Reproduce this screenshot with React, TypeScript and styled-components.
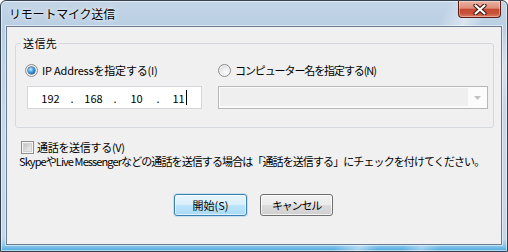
import React from "react";
import styled, { createGlobalStyle } from "styled-components";

const UI_FONT = `"Noto Sans CJK JP", sans-serif`;

const Global = createGlobalStyle`
  html, body { margin: 0; padding: 0; background: #ffffff; }
  body { width: 508px; height: 252px; overflow: hidden; font-family: ${UI_FONT}; }
  #root { width: 508px; height: 252px; }
`;

const Window = styled.div`
  box-sizing: border-box;
  width: 508px;
  height: 252px;
  border: 1px solid #34414f;
  border-radius: 6px 6px 0 0;
  padding: 0 5px 6px 5px;
  display: flex;
  flex-direction: column;
  background:
    linear-gradient(115deg, rgba(255,255,255,0) 72%, rgba(255,255,255,0.45) 76%, rgba(255,255,255,0) 79%, rgba(255,255,255,0) 83%, rgba(255,255,255,0.35) 86%, rgba(255,255,255,0) 89%),
    linear-gradient(to bottom, #c3d5e7 0px, #bacfe3 26px, #c7d8e9 55%, #c4d7ea 95%, #86c4ea 98%, #4ba8de 100%);
  box-shadow: inset 0 0 0 1px rgba(255,255,255,0.55);
  font-family: ${UI_FONT};
`;

const TitleBar = styled.div`
  height: 25px;
  display: flex;
  align-items: flex-start;
  justify-content: space-between;
`;

const Title = styled.div`
  padding: 1px 0 0 3px;
  line-height: 24px;
  font-size: 12px;
  color: #000;
  letter-spacing: -0.2px;
  text-shadow: 0 0 6px rgba(255,255,255,0.95), 0 0 2px rgba(255,255,255,0.8);
`;

const CloseButton = styled.div`
  box-sizing: border-box;
  width: 43px;
  height: 17px;
  margin-right: 1px;
  border: 1px solid #5a1e14;
  border-top: none;
  border-radius: 0 0 4px 4px;
  display: flex;
  align-items: center;
  justify-content: center;
  background: linear-gradient(to bottom, #eab3a5 0%, #de8d79 45%, #c44a31 52%, #c8533a 78%, #e07c62 100%);
  box-shadow: inset 0 0 0 1px rgba(255,255,255,0.35);
`;

const Client = styled.div`
  flex: 1;
  border: 1px solid #6b7d90;
  background: #f0f0f0;
  box-shadow: 0 0 0 1px rgba(255,255,255,0.5);
  padding: 0 7px 0 8px;
  display: flex;
  flex-direction: column;
  color: #000;
  font-size: 11px;
`;

const Text = styled.span<{ $track?: number }>`
  letter-spacing: ${(p) => p.$track ?? 0}px;
  white-space: nowrap;
`;

const GroupBox = styled.fieldset`
  margin: 8px 0 0 0;
  padding: 0 5px 18px 5px;
  border: 1px solid #d5d9dd;
  border-radius: 3px;
  min-inline-size: 0;
`;

const Legend = styled.legend`
  padding: 0 2px;
  font-size: 11px;
  line-height: 16px;
  letter-spacing: 0.4px;
`;

const GroupGrid = styled.div`
  margin-top: 11px;
  padding-left: 4px;
  display: grid;
  grid-template-columns: 193px 1fr;
  row-gap: 8px;
`;

const OptionLabel = styled.label`
  display: flex;
  align-items: center;
  gap: 4px;
  height: 16px;
  line-height: 16px;
`;

const RadioMark = styled.span<{ $checked?: boolean }>`
  box-sizing: border-box;
  width: 13px;
  height: 13px;
  flex: none;
  border-radius: 50%;
  border: 1px solid #8b8b8b;
  display: flex;
  align-items: center;
  justify-content: center;
  background: radial-gradient(circle at 65% 65%, #fdfdfd 0%, #ebebeb 45%, #c8c8c8 100%);
  box-shadow: inset 0 0 0 1px #f6f6f6;
  &::after {
    content: "";
    display: ${(p) => (p.$checked ? "block" : "none")};
    width: 7px;
    height: 7px;
    border-radius: 50%;
    background: radial-gradient(circle at 38% 35%, #c8ecff 0%, #4fb0ee 35%, #1c6bb0 70%, #0d3f70 100%);
    box-shadow: 0 0 0 0.5px #163f66;
  }
`;

const IpField = styled.div`
  box-sizing: border-box;
  width: 175px;
  height: 23px;
  margin-left: 2px;
  padding-left: 3px;
  border: 1px solid #d3d7dc;
  background: #ffffff;
  display: grid;
  grid-template-columns: 39px 4px 39px 4px 39px 4px 39px;
  align-items: center;
  line-height: 16px;
`;

const IpPart = styled.span`
  display: flex;
  align-items: center;
  justify-content: center;
`;

const IpDot = styled.span`
  text-align: center;
`;

const Caret = styled.span`
  display: inline-block;
  width: 1px;
  height: 15px;
  margin-left: 1px;
  background: #000;
`;

const Combo = styled.div`
  box-sizing: border-box;
  height: 23px;
  border: 1px solid #b6b9bc;
  background: #fbfbfb;
  display: flex;
`;

const ComboField = styled.div`
  flex: 1;
  margin: 1px 0 2px 1px;
  background: #efefef;
`;

const ComboArrow = styled.div`
  width: 19px;
  display: flex;
  align-items: center;
  justify-content: center;
`;

const CheckRow = styled.label`
  margin-top: 12px;
  padding-left: 6px;
  height: 14px;
  display: flex;
  align-items: center;
  gap: 3px;
  line-height: 14px;
`;

const CheckMark = styled.span`
  box-sizing: border-box;
  width: 13px;
  height: 13px;
  flex: none;
  border: 1px solid #8e8f8f;
  background: linear-gradient(135deg, #b5b5b5 0%, #dedede 55%, #f6f6f6 100%);
  box-shadow: inset 0 0 0 1px #f4f4f4, inset 0 0 0 2px #d2d2d2;
`;

const Description = styled.div`
  margin-left: 4px;
  line-height: 14px;
  white-space: nowrap;
  letter-spacing: -0.9px;
`;

const ButtonRow = styled.div`
  margin-top: 26px;
  padding-right: 2px;
  display: flex;
  justify-content: center;
  gap: 13px;
`;

const DialogButton = styled.button<{ $default?: boolean }>`
  box-sizing: border-box;
  width: 73px;
  height: 22px;
  padding: 0;
  border-radius: 3px;
  font-family: ${UI_FONT};
  font-size: 11px;
  line-height: 16px;
  color: #000;
  border: 1px solid ${(p) => (p.$default ? "#3c7fb1" : "#707070")};
  background: ${(p) =>
    p.$default
      ? "linear-gradient(to bottom, #e9f5fc 0%, #d8effb 50%, #bde5fc 50%, #a9daf6 100%)"
      : "linear-gradient(to bottom, #f2f2f2 0%, #ebebeb 50%, #dddddd 50%, #cfcfcf 100%)"};
  box-shadow: ${(p) =>
    p.$default
      ? "inset 0 0 0 1px rgba(255,255,255,0.6), 0 0 0 1px rgba(80,170,230,0.25)"
      : "inset 0 0 0 1px rgba(255,255,255,0.75)"};
`;

export default function App() {
  return (
    <>
      <Global />
      <Window>
        <TitleBar>
          <Title>リモートマイク送信</Title>
          <CloseButton>
            <svg width="14" height="11" viewBox="0 0 14 11">
              <path d="M2.5 1.5 L11.5 9.5 M11.5 1.5 L2.5 9.5" stroke="#3b1610" strokeWidth="4.2" strokeLinecap="round" fill="none" />
              <path d="M2.5 1.5 L11.5 9.5 M11.5 1.5 L2.5 9.5" stroke="#ffffff" strokeWidth="2.2" strokeLinecap="round" fill="none" />
            </svg>
          </CloseButton>
        </TitleBar>
        <Client>
          <GroupBox>
            <Legend>送信先</Legend>
            <GroupGrid>
              <OptionLabel>
                <RadioMark $checked />
                <Text $track={-0.2}>IP Addressを指定する(I)</Text>
              </OptionLabel>
              <OptionLabel>
                <RadioMark />
                <Text $track={-1.1}>コンピューター名を指定する(N)</Text>
              </OptionLabel>
              <IpField>
                <IpPart>192</IpPart>
                <IpDot>.</IpDot>
                <IpPart>168</IpPart>
                <IpDot>.</IpDot>
                <IpPart>10</IpPart>
                <IpDot>.</IpDot>
                <IpPart>
                  11
                  <Caret />
                </IpPart>
              </IpField>
              <Combo>
                <ComboField />
                <ComboArrow>
                  <svg width="7" height="4" viewBox="0 0 7 4">
                    <path d="M0 0 H7 L3.5 4 Z" fill="#c2c2c2" />
                  </svg>
                </ComboArrow>
              </Combo>
            </GroupGrid>
          </GroupBox>
          <CheckRow>
            <CheckMark />
            <Text $track={-0.3}>通話を送信する(V)</Text>
          </CheckRow>
          <Description>
            SkypeやLive Messengerなどの通話を送信する場合は「通話を送信する」にチェックを付けてください。
          </Description>
          <ButtonRow>
            <DialogButton $default>
              <Text>開始(S)</Text>
            </DialogButton>
            <DialogButton>
              <Text $track={-1.2}>キャンセル</Text>
            </DialogButton>
          </ButtonRow>
        </Client>
      </Window>
    </>
  );
}
